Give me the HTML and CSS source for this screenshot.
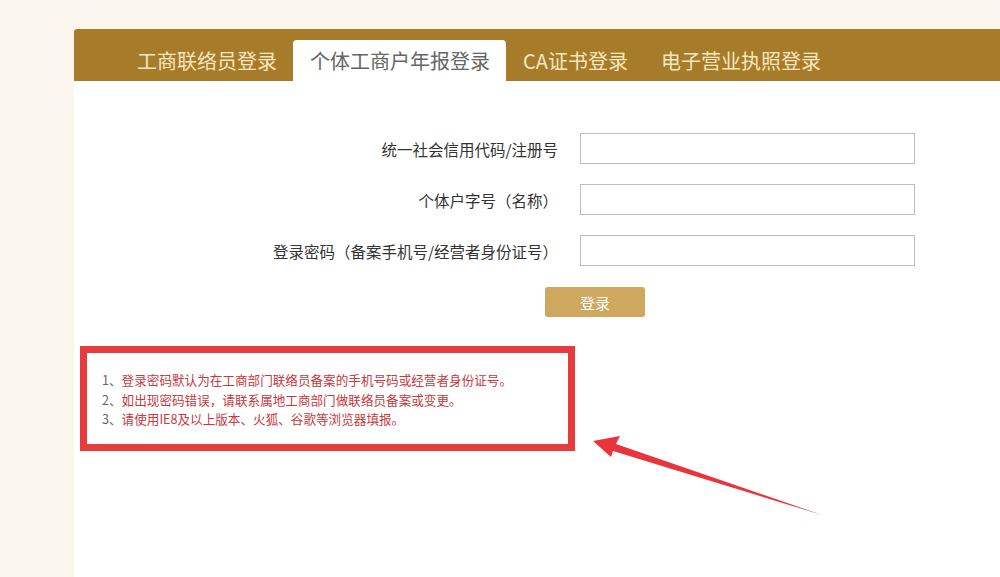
FILE: index.html
```html
<!DOCTYPE html>
<html lang="zh-CN">
<head>
    <meta charset="UTF-8">
    <meta name="viewport" content="width=device-width, initial-scale=1.0">
    <title>个体工商户年报登录</title>
    <link rel="stylesheet" href="styles.css">
</head>
<body>
    <div class="panel">
        <div class="tabs">
            <a class="tab" href="#">工商联络员登录</a>
            <a class="tab active" href="#">个体工商户年报登录</a>
            <a class="tab" href="#">CA证书登录</a>
            <a class="tab" href="#">电子营业执照登录</a>
        </div>
        <form class="login-form">
            <div class="row">
                <label for="code">统一社会信用代码/注册号</label>
                <input type="text" id="code">
            </div>
            <div class="row">
                <label for="name">个体户字号（名称）</label>
                <input type="text" id="name">
            </div>
            <div class="row">
                <label for="pwd">登录密码（备案手机号/经营者身份证号）</label>
                <input type="password" id="pwd">
            </div>
            <button type="button" class="login-btn">登录</button>
        </form>
        <div class="notice">
            <p><span class="num">1、</span>登录密码默认为在工商部门联络员备案的手机号码或经营者身份证号。</p>
            <p><span class="num">2、</span>如出现密码错误，请联系属地工商部门做联络员备案或变更。</p>
            <p><span class="num">3、</span>请使用IE8及以上版本、火狐、谷歌等浏览器填报。</p>
        </div>
        <svg class="arrow" width="240" height="90" viewBox="0 0 240 90">
            <polygon points="3,9 30,4 26,12 232,83 23,19 21,25" fill="#e8343a"/>
        </svg>
    </div>
</body>
</html>
```

FILE: styles.css
```css
body { margin: 0; padding: 29px 0 0 0; background-color: #faf6ee; font-family: "Noto Sans CJK SC", "Liberation Sans", sans-serif; overflow: hidden; }
.panel { position: relative; margin-left: 74px; background: #fff; height: calc(100vh - 29px); }
.tabs { display: flex; align-items: flex-end; height: 52px; padding-left: 46px; background-color: #a67c2b; border-radius: 3px 0 0 0; }
.tab { display: flex; align-items: center; height: 41px; padding: 0 16px 0 17px; font-size: 20px; color: #f6e6bd; text-decoration: none; white-space: nowrap; }
.tab.active { background: #fff; color: #666; border-radius: 4px 4px 0 0; }
.login-form { padding-top: 52px; }
.row { display: flex; align-items: center; margin-bottom: 20px; }
.row label { width: 484px; text-align: right; font-size: 15.5px; color: #333; margin-right: 22px; }
.row input { width: 335px; height: 31px; box-sizing: border-box; border: 1px solid #bdbdbd; padding: 0 6px; font-size: 14px; }
.login-btn { display: block; margin: 21px 0 0 471px; width: 100px; height: 30px; border: none; border-radius: 3px; background-color: #cfa75e; color: #fff; font-size: 15px; font-family: inherit; cursor: pointer; }
.notice { width: 495px; box-sizing: border-box; margin: 29px 0 0 6px; padding: 17px 15px 15px; border: 7px solid #e63c3e; }
.notice p { margin: 0; font-size: 12.6px; line-height: 19.5px; color: #c8383d; white-space: nowrap; }
.notice .num { color: #666; }
.arrow { position: absolute; left: 516px; top: 403px; }
```
